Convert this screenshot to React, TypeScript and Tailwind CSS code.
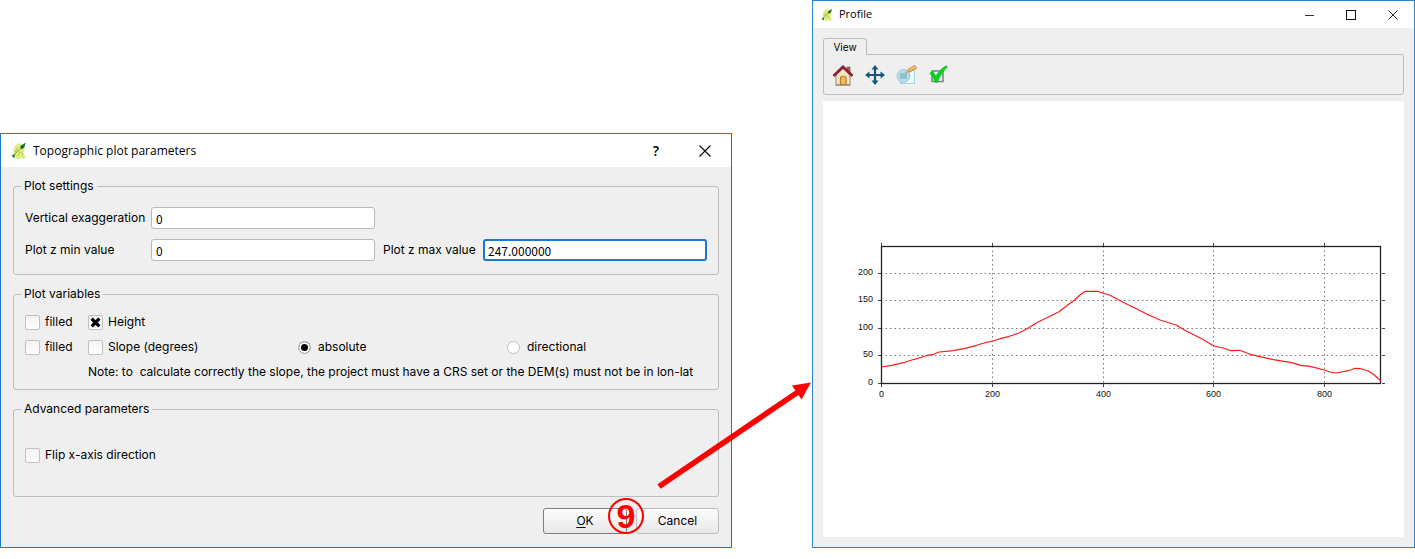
import React, { useState } from 'react';

const profile: [number, number][] = [
  [58.7, 266], [68.7, 264.3], [77, 262.3], [82, 261.3], [88.7, 259], [95.3, 257.3], [103, 254.7],
  [110.3, 253.3], [116.3, 251], [130.3, 249.7], [142, 247.3], [153.7, 244.3], [162, 241.7],
  [170.3, 240], [177, 237.7], [186.3, 235.3], [195.3, 232.3], [203.7, 228], [213.7, 221.7],
  [225.3, 216], [236, 210.7], [243.7, 204.7], [252, 198.7], [257, 194], [262.3, 190.3],
  [274.3, 190.3], [280.3, 192.3], [287, 194.3], [301, 201.7], [312, 207], [323.7, 213], [337, 219],
  [353, 224], [363.7, 230.3], [378.7, 237.7], [390.7, 245], [400.3, 247], [407.7, 249.7],
  [417, 249.3], [427, 253.3], [440.3, 256.3], [450.3, 258.7], [468.7, 261.7], [477.7, 264.3],
  [487, 265.3], [501.3, 269], [507, 271], [513, 272], [525.3, 269.7], [532, 267.3], [537.7, 267.7],
  [545.3, 270], [550.3, 273.3], [557.7, 279.7],
];

const xTicks = [
  { label: '0', x: 58.5 },
  { label: '200', x: 169.5 },
  { label: '400', x: 280.5 },
  { label: '600', x: 390.5 },
  { label: '800', x: 501.5 },
];

const yTicks = [
  { label: '200', y: 172.5 },
  { label: '150', y: 199.5 },
  { label: '100', y: 227.5 },
  { label: '50', y: 254.5 },
  { label: '0', y: 282.5 },
];

function AppIcon({ className }: { className: string }) {
  return (
    <svg viewBox="0 0 16 18" className={className} aria-hidden="true">
      <path d="M4.500 4.500C6 1.500 10 1 11.500 3.500l1 1.500c1.500 2 0 5-1 5.500l2.500 5-2 .8-2-1.500c-1 1.700-3 2.500-4 1.700L5 13c-3-1-2.500-6-.5-8.500z" fill="#e9f07a" stroke="#c3d957" strokeWidth=".7" />
      <path d="M6.500 5l-2 5M9 9l-2 5M10 10l1.500 3.500" stroke="#a3c746" strokeWidth=".9" fill="none" />
      <path d="M2 15L4 12 10 5.500" stroke="#5fa04a" strokeWidth="1" fill="none" />
      <path d="M9 4.500l5.500-4-1 4.500-3 2.500z" fill="#156b2d" />
      <path d="M.5 13.500l3.500-1.500-.5 4.500z" fill="#2c7a35" />
    </svg>
  );
}

function HomeIcon() {
  return (
    <svg viewBox="0 0 22 22" className="size-[22px]" aria-hidden="true">
      <path d="M4 11l7-7 7 7v10H4z" fill="#f3e3bf" stroke="#9a8a78" strokeWidth="1" />
      <path d="M15 3h3v6l-3-3z" fill="#a56a62" stroke="#7b4545" strokeWidth=".7" />
      <path d="M1.500 12L11 3l9.500 9" fill="none" stroke="#8f1f35" strokeWidth="2.800" />
      <path d="M8.500 20.500v-7q2.500-3 5.500 0v7z" fill="#f7bd5a" stroke="#b9772c" strokeWidth="1.200" />
      <path d="M3.500 21h15" stroke="#8f8178" strokeWidth="1" />
    </svg>
  );
}

function PanIcon() {
  return (
    <svg viewBox="0 0 20 20" className="size-5" aria-hidden="true">
      <path d="M10 3v14M3 10h14" stroke="#125a78" strokeWidth="2.200" />
      <path d="M10 0l3.500 4.500h-7zM10 20l-3.500-4.500h7zM0 10l4.500-3.500v7zM20 10l-4.500 3.500v-7z" fill="#125a78" />
    </svg>
  );
}

function ZoomIcon() {
  return (
    <svg viewBox="0 0 22 20" className="h-5 w-[22px]" aria-hidden="true">
      <rect x="4.500" y="5.500" width="14" height="13" fill="#f2fbff" stroke="#a6d3e4" />
      <circle cx="7.500" cy="11" r="6.500" fill="#b7dde7" stroke="#9ccbd8" />
      <path d="M4 8h7v6H4z" fill="#8fc3d1" />
      <path d="M9.500 8l4-2.500" stroke="#d9a86a" strokeWidth="2" />
      <path d="M12.500 6l7.500-4.500" stroke="#c98a3c" strokeWidth="4" />
      <path d="M13 5.500l6.700-4" stroke="#f6bd6c" strokeWidth="2.400" />
    </svg>
  );
}

function CheckIcon() {
  return (
    <svg viewBox="0 0 20 20" className="size-5" aria-hidden="true">
      <rect x="3" y="6" width="11" height="10.500" fill="#f4f4f4" stroke="#777" strokeWidth="1.400" />
      <path d="M.8 8L4 6.300l2.800 4.700Q11 4 17 .8l1.500.7Q12 8 8.300 17.500H6.200Q4.500 12 .8 8z" fill="#08d41f" stroke="#08c41d" strokeWidth=".6" />
    </svg>
  );
}

function Group({ title, children }: { title: string; children: React.ReactNode }) {
  return (
    <fieldset className="min-w-0 rounded-[3px] border border-[#bdbdbd] px-[11px]">
      <legend className="-ml-1 px-[3px] leading-4">{title}</legend>
      {children}
    </fieldset>
  );
}

function Check({ label, initial = false }: { label: string; initial?: boolean }) {
  const [on, setOn] = useState(initial);
  return (
    <label className="flex h-4 items-center gap-[5px] whitespace-nowrap">
      <span className="grid size-[15px] shrink-0 place-items-center">
        <input
          type="checkbox"
          checked={on}
          onChange={() => setOn(!on)}
          className="col-start-1 row-start-1 size-[15px] appearance-none rounded-[2px] border border-[#c0c0c0] bg-linear-to-b from-[#f3f3f3] to-white"
        />
        {on && (
          <svg viewBox="0 0 10 10" className="pointer-events-none z-10 col-start-1 row-start-1 size-[11px]" aria-hidden="true">
            <path d="M1.500 1.500l7 7M8.500 1.500l-7 7" stroke="#000" strokeWidth="3" />
          </svg>
        )}
      </span>
      {label}
    </label>
  );
}

function Radio({ label, initial = false }: { label: string; initial?: boolean }) {
  return (
    <label className="flex h-4 items-center gap-[7px] whitespace-nowrap">
      <input
        type="radio"
        name="slope"
        defaultChecked={initial}
        className="size-[13px] shrink-0 appearance-none rounded-full border border-[#bdbdbd] bg-white checked:bg-black checked:shadow-[inset_0_0_0_2px_#fff]"
      />
      {label}
    </label>
  );
}

const field =
  "h-[22px] w-full min-w-0 rounded-[3px] border border-[#b9b9b9] bg-white px-1 font-['Noto_Sans_CJK_JP',sans-serif] text-xs outline-none";
const button =
  'h-[26px] rounded-[3px] border bg-linear-to-b from-[#fcfcfc] to-[#e8e8e8] text-center';

function PlotDialog() {
  return (
    <section className="relative flex min-w-0 flex-col border border-[#1979ca] bg-[#efefef] font-['Inter',sans-serif] text-xs">
      <header className="flex h-[33px] items-center bg-white pr-5 pl-[10px]">
        <AppIcon className="h-[18px] w-4" />
        <h1 className="ml-[6px] flex-1 font-['Open_Sans',sans-serif] text-xs">Topographic plot parameters</h1>
        <button type="button" className="mr-10 font-['Open_Sans',sans-serif] text-sm font-semibold" aria-label="Help">?</button>
        <button type="button" aria-label="Close">
          <svg viewBox="0 0 12 12" className="size-3" aria-hidden="true">
            <path d="M.5.5l11 11M11.500.5l-11 11" stroke="#111" strokeWidth="1.200" />
          </svg>
        </button>
      </header>

      <form className="flex flex-col gap-[11px] px-3 pt-[11px] pb-[13px]" onSubmit={(e) => e.preventDefault()}>
        <Group title="Plot settings">
          <div className="grid grid-cols-[126px_1fr_108px_1fr] items-center gap-y-[10px] py-[13px]">
            <label htmlFor="vertical">Vertical exaggeration</label>
            <input id="vertical" defaultValue="0" className={field} />
            <label htmlFor="zmin" className="col-start-1">Plot z min value</label>
            <input id="zmin" defaultValue="0" className={field} />
            <label htmlFor="zmax" className="pl-2">Plot z max value</label>
            <input
              id="zmax"
              defaultValue="247.000000"
              className="h-[22px] w-full min-w-0 rounded-[3px] border-2 border-[#1b78cc] bg-white px-[3px] font-['Noto_Sans_CJK_JP',sans-serif] text-xs outline-none"
            />
          </div>
        </Group>

        <Group title="Plot variables">
          <div className="grid grid-cols-[63px_210fr_209fr_200fr] gap-y-[9px] pt-3 pb-[9px]">
            <Check label="filled" />
            <Check label="Height" initial />
            <div className="col-start-1">
              <Check label="filled" />
            </div>
            <Check label="Slope (degrees)" />
            <Radio label="absolute" initial />
            <Radio label="directional" />
            <p className="col-span-3 col-start-2 w-0 leading-4 whitespace-pre">
              {'Note: to  calculate correctly the slope, the project must have a CRS set or the DEM(s) must not be in lon-lat'}
            </p>
          </div>
        </Group>

        <Group title="Advanced parameters">
          <div className="pt-[30px] pb-[33px]">
            <Check label="Flip x-axis direction" />
          </div>
        </Group>

        <div className="flex justify-end gap-[9px]">
          <div className="relative">
            <button type="submit" className={`${button} w-[84px] border-[#7d7d7d]`}>
              <span className="underline underline-offset-2">O</span>K
            </button>
            <span className="pointer-events-none absolute -top-[10px] -right-[17px] z-10 flex size-9 items-center justify-center rounded-full border-2 border-[#f00] font-['Liberation_Sans',sans-serif] text-[34px] leading-none font-bold text-[#f00]">
              9
            </span>
          </div>
          <button type="button" className={`${button} w-[83px] border-[#bdbdbd]`}>Cancel</button>
        </div>
      </form>

      <svg viewBox="0 0 156 112" className="pointer-events-none absolute right-[-81px] bottom-[56px] z-10 h-28 w-[156px]" aria-hidden="true">
        <path d="M3 107.500L142 13" stroke="#f00" strokeWidth="5.600" />
        <path d="M155 3.500L136 6.500L145.500 20.500z" fill="#f00" />
      </svg>
    </section>
  );
}

function ProfileChart() {
  return (
    <svg viewBox="0 0 581 436" className="block w-full bg-white" role="img" aria-label="Profile">
      <g stroke="#777" strokeWidth="1" strokeDasharray="1.500 3">
        {xTicks.slice(1).map((t) => (
          <path key={t.label} d={`M${t.x} 145V282`} />
        ))}
        {yTicks.slice(0, 4).map((t) => (
          <path key={t.label} d={`M58 ${t.y}H558`} />
        ))}
      </g>
      <g stroke="#444" strokeWidth="1">
        {xTicks.map((t) => (
          <path key={t.label} d={`M${t.x} 142v3M${t.x} 283v3`} />
        ))}
        {yTicks.map((t) => (
          <path key={t.label} d={`M55 ${t.y}h3M559 ${t.y}h3`} />
        ))}
      </g>
      <rect x="58.500" y="145.500" width="499" height="137" fill="none" stroke="#222" strokeWidth="1.300" />
      <polyline points={profile.map((p) => p.join(',')).join(' ')} fill="none" stroke="#ff1a1a" strokeWidth="1.200" strokeLinejoin="round" />
      <g className="font-['Liberation_Sans',sans-serif] text-[9px]" fill="#111">
        {xTicks.map((t) => (
          <text key={t.label} x={t.x} y="296" textAnchor="middle">{t.label}</text>
        ))}
        {yTicks.map((t) => (
          <text key={t.label} x="50" y={t.y + 1} textAnchor="end">{t.label}</text>
        ))}
      </g>
    </svg>
  );
}

function ProfileWindow() {
  return (
    <section className="flex min-w-0 flex-col border border-[#2a83cf] bg-[#efefef]">
      <header className="flex h-[27px] items-center bg-white pr-4 pl-2">
        <AppIcon className="h-[14px] w-3" />
        <h2 className="ml-[6px] flex-1 font-['Open_Sans',sans-serif] text-[11px]">Profile</h2>
        <div className="flex items-center gap-8">
          <button type="button" aria-label="Minimize">
            <svg viewBox="0 0 10 10" className="size-[10px]" aria-hidden="true"><path d="M1 5.500h9" stroke="#333" /></svg>
          </button>
          <button type="button" aria-label="Maximize">
            <svg viewBox="0 0 10 10" className="size-[10px]" aria-hidden="true"><rect x=".5" y=".5" width="9" height="9" fill="none" stroke="#111" /></svg>
          </button>
          <button type="button" aria-label="Close">
            <svg viewBox="0 0 10 10" className="size-[10px]" aria-hidden="true"><path d="M.5.5l9 9M9.500.5l-9 9" stroke="#222" /></svg>
          </button>
        </div>
      </header>
      <div className="flex flex-col px-[10px] pt-[10px] pb-[10px]">
        <button
          type="button"
          className="z-10 -mb-px h-[17px] w-11 self-start rounded-t-[3px] border border-b-0 border-[#bdbdbd] bg-[#efefef] font-['Inter',sans-serif] text-[10px] leading-4"
        >
          View
        </button>
        <div className="mb-[6px] flex h-[41px] items-center gap-[11px] rounded-[3px] rounded-tl-none border border-[#bdbdbd] px-2">
          <button type="button" aria-label="Home"><HomeIcon /></button>
          <button type="button" aria-label="Pan"><PanIcon /></button>
          <button type="button" aria-label="Zoom"><ZoomIcon /></button>
          <button type="button" aria-label="Options"><CheckIcon /></button>
        </div>
        <ProfileChart />
      </div>
    </section>
  );
}

export default function App() {
  return (
    <main className="grid grid-cols-[732fr_603fr] items-end gap-x-20 bg-white pb-[11px] text-black">
      <PlotDialog />
      <ProfileWindow />
    </main>
  );
}
